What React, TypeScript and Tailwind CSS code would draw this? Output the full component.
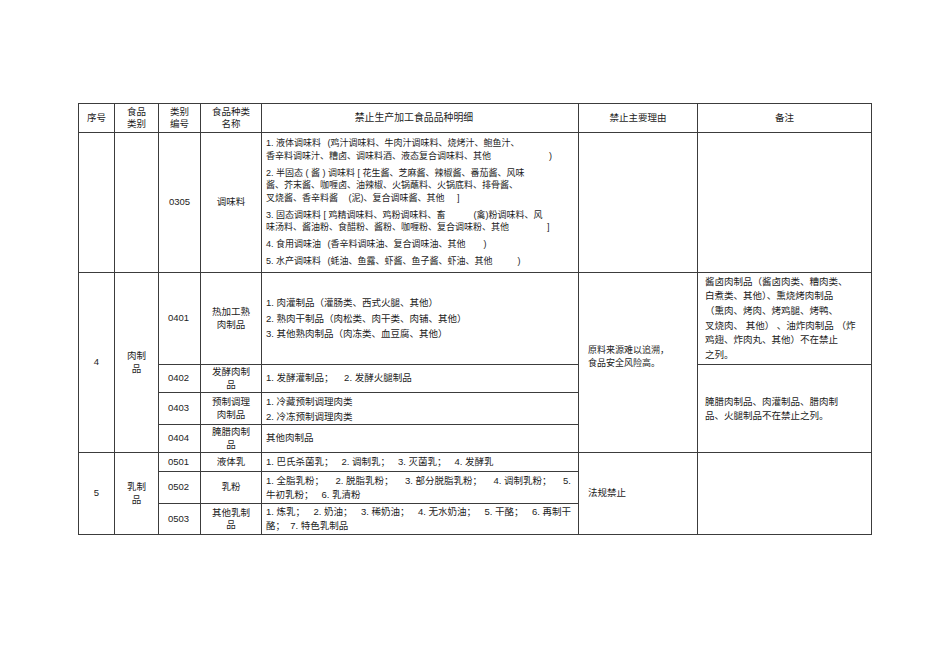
import React from "react";

const font = { fontFamily: '"Liberation Sans", "Noto Sans CJK SC", sans-serif' };

const Gap = ({ w }: { w: number }) => <span className="inline-block" style={{ width: w }} />;

const td = "border border-[#3c3c3c] px-[4px] py-0 align-middle";
const tdc = td + " text-center";
const code = td + " pl-[9px]";

const seasoning: React.ReactNode[][] = [
  [
    <>1. 液体调味料 <Gap w={4} />(鸡汁调味料、牛肉汁调味料、烧烤汁、鲍鱼汁、</>,
    <>香辛料调味汁、糟卤、调味料酒、液态复合调味料、其他<Gap w={58} />)</>,
  ],
  [
    <>2. 半固态 ( 酱 ) 调味料 [ 花生酱、芝麻酱、辣椒酱、番茄酱、风味</>,
    <>酱、芥末酱、咖喱卤、油辣椒、火锅蘸料、火锅底料、排骨酱、</>,
    <>叉烧酱、香辛料酱 <Gap w={8} />(泥)、复合调味酱、其他 <Gap w={10} />]</>,
  ],
  [
    <>3. 固态调味料 [ 鸡精调味料、鸡粉调味料、畜<Gap w={28} />(禽)粉调味料、风</>,
    <>味汤料、酱油粉、食醋粉、酱粉、咖喱粉、复合调味粉、其他<Gap w={38} />]</>,
  ],
  [<>4. 食用调味油 <Gap w={4} />(香辛料调味油、复合调味油、其他<Gap w={18} />)</>],
  [<>5. 水产调味料 <Gap w={4} />(蚝油、鱼露、虾酱、鱼子酱、虾油、其他<Gap w={25} />)</>],
];

const Spread = ({ parts }: { parts: string[] }) => (
  <div className="flex justify-between pr-[3px]">
    {parts.map((p) => (
      <span key={p}>{p}</span>
    ))}
  </div>
);

export default function App() {
  return (
    <div className="min-h-screen w-full bg-white pt-[103px] pl-[78px]" style={font}>
      <table className="table-fixed border-collapse text-[9.5px] leading-[12.5px] text-[#1c1c1c]" style={{ width: 793 }}>
        <colgroup>
          <col style={{ width: 36 }} />
          <col style={{ width: 44 }} />
          <col style={{ width: 42 }} />
          <col style={{ width: 61 }} />
          <col style={{ width: 317 }} />
          <col style={{ width: 119 }} />
          <col style={{ width: 174 }} />
        </colgroup>
        <tbody>
          <tr className="h-[29px]">
            <td className={tdc}>序号</td>
            <td className={tdc}>食品<br />类别</td>
            <td className={tdc}>类别<br />编号</td>
            <td className={tdc}>食品种类<br />名称</td>
            <td className={tdc + " text-[9.9px] pr-[16px]"}>禁止生产加工食品品种明细</td>
            <td className={tdc}>禁止主要理由</td>
            <td className={tdc}>备注</td>
          </tr>
          <tr className="h-[140px]">
            <td className={td}></td>
            <td className={td}></td>
            <td className={tdc}>0305</td>
            <td className={tdc}>调味料</td>
            <td className={td + " whitespace-pre text-[9px] leading-[12.5px]"}>
              {seasoning.map((item, i) => (
                <div key={i} className={i ? "mt-[4.5px]" : ""}>
                  {item.map((line, j) => (
                    <div key={j}>{line}</div>
                  ))}
                </div>
              ))}
            </td>
            <td className={td}></td>
            <td className={td}></td>
          </tr>
          <tr className="h-[92px]">
            <td className={tdc} rowSpan={4}>4</td>
            <td className={tdc} rowSpan={4}>肉制<br />品</td>
            <td className={code}>0401</td>
            <td className={tdc}>热加工熟<br />肉制品</td>
            <td className={td + " leading-[15.8px]"}>
              <div>1. 肉灌制品（灌肠类、西式火腿、其他）</div>
              <div>2. 熟肉干制品（肉松类、肉干类、肉铺、其他）</div>
              <div>3. 其他熟肉制品（肉冻类、血豆腐、其他）</div>
            </td>
            <td className={td + " pl-[9px] text-[9px]"} rowSpan={4}>
              <div className="-mt-[12px] leading-[13px]">原料来源难以追溯，<br />食品安全风险高。</div>
            </td>
            <td className={td + " whitespace-pre leading-[14.6px] pl-[7px]"}>
              <div>酱卤肉制品（酱卤肉类、糟肉类、</div>
              <div>白煮类、其他）、熏烧烤肉制品</div>
              <div>（熏肉、烤肉、烤鸡腿、烤鸭、</div>
              <div>叉烧肉、 其他） 、油炸肉制品 （炸</div>
              <div>鸡翅、炸肉丸、其他）不在禁止</div>
              <div>之列。</div>
            </td>
          </tr>
          <tr className="h-[28px]">
            <td className={code}>0402</td>
            <td className={tdc}>发酵肉制<br />品</td>
            <td className={td + " whitespace-pre"}>1. 发酵灌制品；    2. 发酵火腿制品</td>
            <td className={td + " pl-[7px] leading-[14px]"} rowSpan={3}>
              <div>腌腊肉制品、肉灌制品、腊肉制</div>
              <div>品、火腿制品不在禁止之列。</div>
            </td>
          </tr>
          <tr className="h-[32px]">
            <td className={code}>0403</td>
            <td className={tdc}>预制调理<br />肉制品</td>
            <td className={td + " leading-[15px]"}>
              <div>1. 冷藏预制调理肉类</div>
              <div>2. 冷冻预制调理肉类</div>
            </td>
          </tr>
          <tr className="h-[28px]">
            <td className={code}>0404</td>
            <td className={tdc}>腌腊肉制<br />品</td>
            <td className={td}>其他肉制品</td>
          </tr>
          <tr className="h-[19px]">
            <td className={tdc} rowSpan={3}>5</td>
            <td className={tdc} rowSpan={3}>乳制<br />品</td>
            <td className={code}>0501</td>
            <td className={tdc}>液体乳</td>
            <td className={td + " whitespace-pre"}>1. 巴氏杀菌乳；   2. 调制乳；   3. 灭菌乳；   4. 发酵乳</td>
            <td className={td + " pl-[9px]"} rowSpan={3}>法规禁止</td>
            <td className={td} rowSpan={3}></td>
          </tr>
          <tr className="h-[32px]">
            <td className={code}>0502</td>
            <td className={tdc}>乳粉</td>
            <td className={td + " leading-[14px]"}>
              <Spread parts={["1. 全脂乳粉；", "2. 脱脂乳粉；", "3. 部分脱脂乳粉；", "4. 调制乳粉；", "5."]} />
              <div className="whitespace-pre">牛初乳粉；   6. 乳清粉</div>
            </td>
          </tr>
          <tr className="h-[31px]">
            <td className={code}>0503</td>
            <td className={tdc}>其他乳制<br />品</td>
            <td className={td + " leading-[14px]"}>
              <Spread parts={["1. 炼乳；", "2. 奶油；", "3. 稀奶油；", "4. 无水奶油；", "5. 干酪；", "6. 再制干"]} />
              <div className="whitespace-pre">酪；  7. 特色乳制品</div>
            </td>
          </tr>
        </tbody>
      </table>
    </div>
  );
}
